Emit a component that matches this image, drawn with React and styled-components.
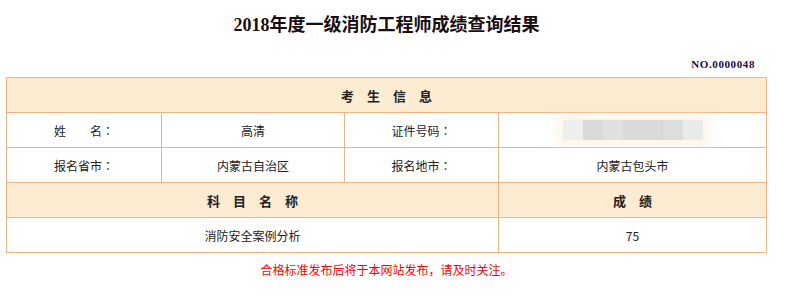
import styled, { createGlobalStyle } from "styled-components";

const Global = createGlobalStyle`
    body {
        margin: 0;
        background: #fff;
        font-family: "Noto Sans CJK SC", "Liberation Sans", sans-serif;
        color: #222;
    }
`

const Page = styled.div`
    width: 761px;
    margin-left: 6px;
`

const Title = styled.h1`
    margin: 13px 0 0;
    font-family: "Liberation Serif", "Noto Sans CJK SC", serif;
    font-size: 18px;
    line-height: 24px;
    font-weight: bold;
    color: #1a0d0d;
    text-align: center;
`

const Serial = styled.div`
    margin: 20px 0 6px;
    padding-right: 12px;
    font-family: "Liberation Serif", serif;
    font-size: 11px;
    line-height: 14px;
    font-weight: bold;
    letter-spacing: 0.6px;
    color: #1b0b45;
    text-align: right;
`

const Grid = styled.div`
    display: grid;
    grid-template-columns: 155px 183px 154px 268px;
    border-left: 1px solid #f4b183;
    border-top: 1px solid #f4b183;
`

const Cell = styled.div`
    grid-column: span ${p => p.$span || 1};
    height: 34px;
    border-right: 1px solid #f4b183;
    border-bottom: 1px solid #f4b183;
    background: ${p => (p.$head ? "#fdebd2" : "#fff")};
    display: flex;
    align-items: center;
    justify-content: center;
    font-size: ${p => (p.$head ? "13px" : "12px")};
    font-weight: ${p => (p.$head ? "bold" : "normal")};
    letter-spacing: ${p => p.$gap || "0"};
    padding-left: ${p => p.$gap || "0"};
    white-space: pre;
`

const Colon = styled.span`
    font-family: "Noto Sans CJK JP", sans-serif;
`

const Blur = styled.div`
    display: flex;
    height: 20px;
    box-shadow: 0 0 12px 6px rgba(253, 235, 210, 0.5);
`

const Block = styled.span`
    width: ${p => p.$w}px;
    background: ${p => p.$c};
`

const Note = styled.p`
    margin: 8px 0 0;
    font-size: 12px;
    line-height: 18px;
    color: #ff0000;
    text-align: center;
`

const blocks = [
    [20, "#eeeeee"],
    [20, "#d9d9d9"],
    [20, "#e1dfdf"],
    [40, "#dadada"],
    [20, "#dddddd"],
    [20, "#e9eaea"],
]

function Label({ children }) {
    return (
        <Cell>
            {children}
            <Colon>：</Colon>
        </Cell>
    )
}

export default function App() {
    return (
        <Page>
            <Global />
            <Title>2018年度一级消防工程师成绩查询结果</Title>
            <Serial>NO.0000048</Serial>
            <Grid>
                <Cell $head $span={4} $gap="13px">考生信息</Cell>
                <Label>姓　　名</Label>
                <Cell>高清</Cell>
                <Label>证件号码</Label>
                <Cell>
                    <Blur>
                        {blocks.map(([w, c], i) => (
                            <Block key={i} $w={w} $c={c} />
                        ))}
                    </Blur>
                </Cell>
                <Label>报名省市</Label>
                <Cell>内蒙古自治区</Cell>
                <Label>报名地市</Label>
                <Cell>内蒙古包头市</Cell>
                <Cell $head $span={3} $gap="13px">科目名称</Cell>
                <Cell $head $gap="13px">成绩</Cell>
                <Cell $span={3}>消防安全案例分析</Cell>
                <Cell>75</Cell>
            </Grid>
            <Note>合格标准发布后将于本网站发布，请及时关注。</Note>
        </Page>
    )
}
